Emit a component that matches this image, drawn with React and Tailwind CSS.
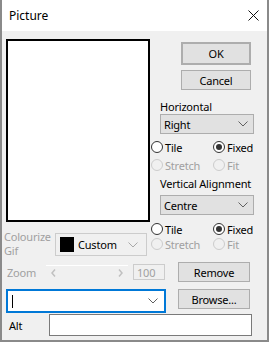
import React from 'react';

function Chevron({ color = '#606060' }) {
  return (
    <svg width="10" height="6" viewBox="0 0 10 6" className="shrink-0">
      <path d="M0.5 0.5 L5 5 L9.5 0.5" fill="none" stroke={color} strokeWidth="1" />
    </svg>
  );
}

function Radio({ label, checked, disabled }) {
  return (
    <div className="flex items-center gap-[2px] h-[14px]">
      <span
        className={`w-[12px] h-[12px] rounded-full border flex items-center justify-center ${
          disabled ? 'border-[#cccccc] bg-[#f0f0f0]' : 'border-[#333333] bg-white'
        }`}
      >
        {checked && <span className="w-[6px] h-[6px] rounded-full bg-[#333333]" />}
      </span>
      <span className={disabled ? 'text-[#a0a0a0]' : 'text-black'}>{label}</span>
    </div>
  );
}

function RadioRow({ a, b, aOn, bOn, disabled, className = '' }) {
  return (
    <div className={`grid grid-cols-[62px_1fr] ${className}`}>
      <Radio label={a} checked={aOn} disabled={disabled} />
      <Radio label={b} checked={bOn} disabled={disabled} />
    </div>
  );
}

function Select({ value, className = '' }) {
  return (
    <div className={`ml-[9px] w-[94px] h-[20px] border border-[#adadad] bg-[#e1e1e1] flex items-center justify-between pl-[3px] pr-[5px] ${className}`}>
      <span>{value}</span>
      <Chevron />
    </div>
  );
}

function Button({ children, className = '' }) {
  return (
    <div className={`border border-[#adadad] bg-[#e1e1e1] flex items-center justify-center ${className}`}>
      {children}
    </div>
  );
}

export default function App() {
  return (
    <div className="w-[269px] h-[342px] box-border border-x-2 border-b-2 border-[#8a8a8a] bg-[#f0f0f0] flex flex-col text-[11px] leading-[13px] tracking-[-0.2px] text-black font-['Noto_Sans',sans-serif]">
      {/* title bar */}
      <div className="h-[31px] bg-white flex items-center justify-between pl-[7px] pr-[8px] shrink-0">
        <span className="text-[12px] tracking-normal">Picture</span>
        <svg width="11" height="11" viewBox="0 0 11 11">
          <path d="M0.5 0.5 L10.5 10.5 M10.5 0.5 L0.5 10.5" stroke="#111" strokeWidth="1" />
        </svg>
      </div>

      {/* top section */}
      <div className="flex pt-[8px] pl-[2px]">
        <div className="w-[146px] flex flex-col">
          <div className="ml-[2px] w-[144px] h-[183px] border-2 border-black bg-white" />
          <div className="mt-[11px] flex">
            <div className="w-[51px] text-[#a0a0a0] leading-[14px] -mt-[3px]">
              <div>Colourize</div>
              <div>Gif</div>
            </div>
            <div className="w-[92px] h-[23px] border border-[#cccccc] bg-[#f0f0f0] flex items-center pl-[4px] pr-[8px]">
              <span className="w-[14px] h-[15px] bg-black shrink-0" />
              <span className="ml-[4px] flex-1">Custom</span>
              <Chevron color="#a8a8a8" />
            </div>
          </div>
        </div>

        <div className="ml-[1px] w-[103px] flex flex-col">
          <Button className="mt-[3px] ml-[30px] w-[70px] h-[23px] border-2 border-[#0078d7]">OK</Button>
          <Button className="mt-[5px] ml-[30px] w-[70px] h-[20px]">Cancel</Button>
          <div className="mt-[10px] ml-[9px]">Horizontal</div>
          <Select value="Right" className="mt-[1px]" />
          <RadioRow a="Tile" b="Fixed" bOn className="mt-[6px]" />
          <RadioRow a="Stretch" b="Fit" disabled className="mt-[4px]" />
          <div className="mt-[5px] ml-[9px]">Vertical Alignment</div>
          <Select value="Centre" className="mt-[5px]" />
          <RadioRow a="Tile" b="Fixed" bOn className="mt-[7px]" />
          <RadioRow a="Stretch" b="Fit" disabled className="mt-[1px]" />
        </div>
      </div>

      {/* zoom row */}
      <div className="mt-[4px] flex items-center">
        <div className="w-[176px] flex items-center pl-[5px]">
          <span className="text-[#a0a0a0] w-[39px]">Zoom</span>
          <div className="w-[82px] h-[14px] border-t border-white flex items-center justify-between px-[5px]">
            <svg width="5" height="8" viewBox="0 0 5 8"><path d="M4 0.5 L1 4 L4 7.5" fill="none" stroke="#c0c0c0" strokeWidth="1.5" /></svg>
            <svg width="5" height="8" viewBox="0 0 5 8"><path d="M1 0.5 L4 4 L1 7.5" fill="none" stroke="#c0c0c0" strokeWidth="1.5" /></svg>
          </div>
          <div className="ml-[5px] w-[32px] h-[16px] border border-[#cccccc] flex items-center pl-[3px] text-[#a0a0a0]">100</div>
        </div>
        <Button className="w-[72px] h-[20px]">Remove</Button>
      </div>

      {/* path row */}
      <div className="mt-[7px] flex items-start">
        <div className="ml-[4px] w-[160px] h-[24px] border-2 border-[#0078d7] bg-white flex items-center justify-between pl-[4px] pr-[6px]">
          <span className="w-[1px] h-[13px] bg-black" />
          <Chevron />
        </div>
        <Button className="ml-[12px] w-[72px] h-[20px]">Browse...</Button>
      </div>

      {/* alt row */}
      <div className="mt-[1px] flex items-center">
        <span className="ml-[7px] w-[40px]">Alt</span>
        <div className="w-[203px] h-[22px] border border-[#7a7a7a] bg-white" />
      </div>
    </div>
  );
}
